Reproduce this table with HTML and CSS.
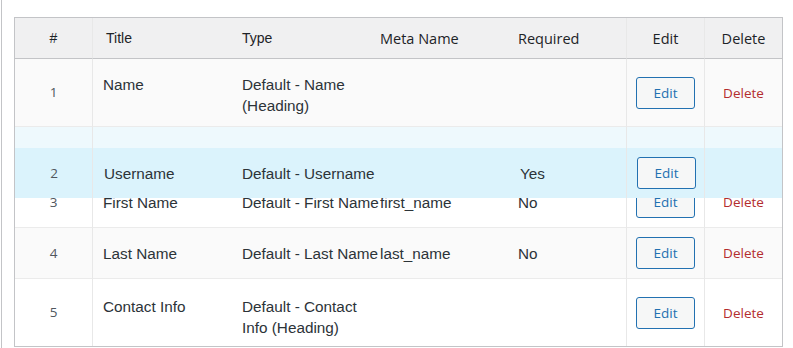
FILE: index.html
```html
<!DOCTYPE html>
<html>
<head>
  <meta charset="UTF-8">
  <link rel="stylesheet" href="styles.css">
</head>
<body>
  <div class="page">
    <div class="table-wrap">
      <table class="fields">
        <colgroup>
          <col class="w-num"><col class="w-title"><col class="w-type"><col class="w-meta"><col class="w-req"><col class="w-edit"><col class="w-del">
        </colgroup>
        <thead>
          <tr>
            <th class="num">#</th>
            <th class="title">Title</th>
            <th>Type</th>
            <th class="alt-font">Meta Name</th>
            <th class="alt-font req">Required</th>
            <th class="alt-font action">Edit</th>
            <th class="alt-font action del">Delete</th>
          </tr>
        </thead>
        <tbody>
          <tr class="striped">
            <td class="num">1</td>
            <td class="title">Name</td>
            <td>Default - Name (Heading)</td>
            <td></td>
            <td class="req"></td>
            <td class="action"><a class="edit-btn">Edit</a></td>
            <td class="action del"><a class="delete-link">Delete</a></td>
          </tr>
          <tr class="placeholder">
            <td class="num"></td>
            <td class="title"></td>
            <td></td>
            <td></td>
            <td class="req"></td>
            <td class="action"></td>
            <td class="action del"></td>
          </tr>
          <tr>
            <td class="num">3</td>
            <td class="title">First Name</td>
            <td><span class="nowrap">Default - First Name</span></td>
            <td>first_name</td>
            <td class="req">No</td>
            <td class="action"><a class="edit-btn">Edit</a></td>
            <td class="action del"><a class="delete-link">Delete</a></td>
          </tr>
          <tr class="striped">
            <td class="num">4</td>
            <td class="title">Last Name</td>
            <td><span class="nowrap">Default - Last Name</span></td>
            <td>last_name</td>
            <td class="req">No</td>
            <td class="action"><a class="edit-btn">Edit</a></td>
            <td class="action del"><a class="delete-link">Delete</a></td>
          </tr>
          <tr class="last">
            <td class="num">5</td>
            <td class="title">Contact Info</td>
            <td>Default - Contact Info (Heading)</td>
            <td></td>
            <td class="req"></td>
            <td class="action"><a class="edit-btn">Edit</a></td>
            <td class="action del"><a class="delete-link">Delete</a></td>
          </tr>
        </tbody>
      </table>

      <!-- row being dragged -->
      <table class="fields drag-helper">
        <colgroup>
          <col class="w-num"><col class="w-title"><col class="w-type"><col class="w-meta"><col class="w-req"><col class="w-edit"><col class="w-del">
        </colgroup>
        <tbody>
          <tr>
            <td class="num">2</td>
            <td class="title">Username</td>
            <td>Default - Username</td>
            <td></td>
            <td class="req">Yes</td>
            <td class="action"><a class="edit-btn">Edit</a></td>
            <td class="action del"></td>
          </tr>
        </tbody>
      </table>
    </div>
  </div>
</body>
</html>
```

FILE: styles.css
```css
body {
  margin: 0;
  padding: 0;
  font-family: "Liberation Sans", Arial, sans-serif;
  color: #2c3338;
}

.page {
  margin-left: 1px;
  border-left: 1px solid #c3c4c7;
  padding: 17px 0 0 12px;
  min-height: 100vh;
  box-sizing: border-box;
}

.table-wrap {
  position: relative;
  width: 769px;
}

.fields {
  width: 769px;
  table-layout: fixed;
  border-collapse: separate;
  border-spacing: 0;
  border: 1px solid #c3c4c7;
}

.w-num { width: 78px; }
.w-title { width: 149px; }
.w-type { width: 138px; }
.w-meta { width: 138px; }
.w-req { width: 109px; }
.w-edit { width: 78px; }
.w-del { width: 77px; }

.fields th {
  background: #f0f0f1;
  font-weight: normal;
  font-size: 14px;
  line-height: 21px;
  color: #1d2327;
  text-align: left;
  padding: 10px 0 9px 0;
  border-bottom: 1px solid #c3c4c7;
}

.fields th.title {
  padding-left: 13px;
}

.fields th.alt-font {
  font-family: "Open Sans", "Noto Sans", sans-serif;
  font-size: 14.5px;
}

.fields td {
  font-size: 15.3px;
  line-height: 21px;
  vertical-align: top;
  padding: 15px 0 10px 0;
  border-bottom: 1px solid #ebebeb;
  background: #fff;
}

.fields tr.striped td {
  background: #fafafa;
}

.fields tr.last td {
  border-bottom: none;
  padding-top: 17px;
  padding-bottom: 8px;
}

.fields .num {
  text-align: center;
  border-right: 1px solid #e8e8e8;
}

.fields td.num,
.fields tr.last td.num {
  vertical-align: middle;
  padding: 9px 0;
  font-family: "Open Sans", "Noto Sans", sans-serif;
  font-size: 13.5px;
  color: #50575e;
}

.fields .title {
  padding-left: 10px;
}

.fields .req {
  border-right: 1px solid #e8e8e8;
}

.fields .action {
  text-align: center;
  border-right: 1px solid #e8e8e8;
}

.fields .action.del {
  border-right: none;
}

.fields td.action,
.fields tr.last td.action {
  vertical-align: middle;
  padding: 9px 0;
}

.nowrap {
  white-space: nowrap;
}

.edit-btn {
  display: inline-block;
  box-sizing: border-box;
  width: 59px;
  height: 32px;
  line-height: 30px;
  border: 1px solid #2271b1;
  border-radius: 3px;
  background: #f6f7f7;
  color: #2271b1;
  font-family: "Open Sans", "Noto Sans", sans-serif;
  font-size: 13.5px;
  text-align: center;
  vertical-align: middle;
}

.delete-link {
  color: #b32d2e;
  font-family: "Open Sans", "Noto Sans", sans-serif;
  font-size: 13.5px;
}

.fields tr.placeholder td {
  background: #eef9fd;
  height: 49px;
  padding: 0;
}

.drag-helper {
  position: absolute;
  top: 131px;
  left: 1px;
  width: 767px;
  border: none;
}

.drag-helper td {
  background: #dbf3fc;
  border-bottom: none;
  vertical-align: middle;
  height: 50px;
  padding: 0;
}

.drag-helper td.num {
  padding: 0 0 0 1px;
}

.drag-helper td.title {
  padding-left: 11px;
}

.drag-helper td.req {
  padding-left: 2px;
}

.drag-helper td.action {
  padding: 0 0 0 2px;
}
```
